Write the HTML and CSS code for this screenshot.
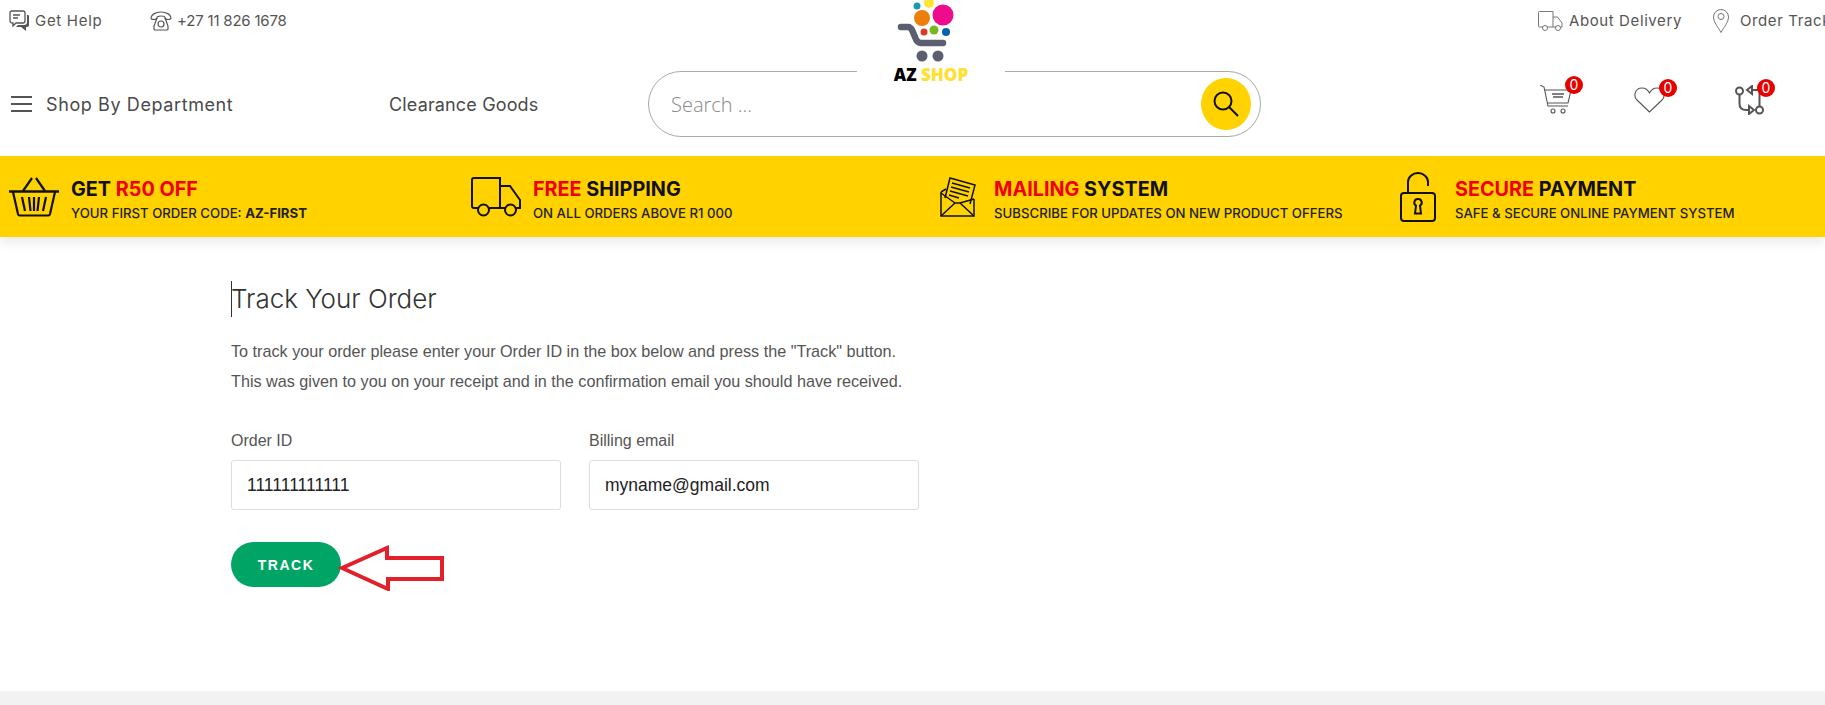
FILE: index.html
```html
<!DOCTYPE html>
<html lang="en">
<head>
    <meta charset="UTF-8">
    <meta name="viewport" content="width=device-width, initial-scale=1.0">
    <title>Track Your Order</title>
    <link rel="stylesheet" href="styles.css">
</head>
<body>

    <!-- Top bar -->
    <div class="top-bar">
        <a class="top-link link-help">
            <svg width="21" height="22" viewBox="0 0 21 22" fill="none" stroke="#555" stroke-width="1.3">
                <path d="M3 1h11a2 2 0 0 1 2 2v8a2 2 0 0 1-2 2H7l-3 3v-3H3a2 2 0 0 1-2-2V3a2 2 0 0 1 2-2z"/>
                <path d="M4 5h7M4 8h5"/>
                <path d="M18 5h1a1 1 0 0 1 1 1v9a2 2 0 0 1-2 2h-1v4l-5-4H7l2-2h6a3 3 0 0 0 3-3z" fill="#555" stroke="none"/>
            </svg>
            Get Help
        </a>
        <a class="top-link link-phone">
            <svg width="22" height="20" viewBox="0 0 22 20" fill="none" stroke="#555" stroke-width="1.2">
                <path d="M1 7c0-3 4-6 10-6s10 3 10 6c0 1-1 1.500-3 1.500S15 8 15 6.500c0-1-2-1.500-4-1.500S7 5.500 7 6.500C7 8 6 8.500 4 8.500S1 8 1 7z"/>
                <path d="M7 7l-3 8v3a1 1 0 0 0 1 1h12a1 1 0 0 0 1-1v-3l-3-8"/>
                <circle cx="11" cy="13" r="3"/>
            </svg>
            +27 11 826 1678
        </a>
        <a class="top-link link-delivery">
            <svg width="25" height="20" viewBox="0 0 25 20" fill="none" stroke="#777" stroke-width="1">
                <path d="M5 16H1.500a1 1 0 0 1-1-1V1.500a1 1 0 0 1 1-1H15V16H9"/>
                <path d="M15 6h4.500l4.500 6v4h-1.500M18 16h-3"/>
                <circle cx="7" cy="17" r="2.500"/>
                <circle cx="20" cy="17" r="2.500"/>
            </svg>
            About Delivery
        </a>
        <a class="top-link link-track">
            <svg width="16" height="24" viewBox="0 0 16 24" fill="none" stroke="#777" stroke-width="1">
                <path d="M8 23.500C5 18 .5 13 .5 8a7.500 7.500 0 0 1 15 0c0 5-4.500 10-7.500 15.500z"/>
                <circle cx="8" cy="7.500" r="3"/>
            </svg>
            Order Tracking
        </a>
    </div>

    <!-- Main nav with search -->
    <div class="nav-row">
        <a class="nav-link nav-dept">
            <svg width="21" height="16" viewBox="0 0 21 16" stroke="#555" stroke-width="2">
                <path d="M0 1h21M0 8h21M0 15h21"/>
            </svg>
            Shop By Department
        </a>
        <a class="nav-link nav-clearance">Clearance Goods</a>

        <form class="search-box">
            <div class="logo">
                <svg width="84" height="62" viewBox="0 0 84 62">
                    <circle cx="23" cy="6" r="3.500" fill="#1a9aa8"/>
                    <circle cx="35" cy="3" r="5" fill="#ffe533"/>
                    <circle cx="49" cy="15" r="10.500" fill="#ec0c8c"/>
                    <circle cx="28" cy="18" r="8" fill="#ec7f0c"/>
                    <circle cx="30" cy="32" r="3.500" fill="#e0362c"/>
                    <circle cx="40" cy="30" r="4.500" fill="#7cb422"/>
                    <circle cx="52" cy="32" r="4" fill="#0c62a8"/>
                    <path d="M7 27h7c2 0 3 1 4 3l3 7c1 3 3 6 6 6h22" fill="none" stroke="#5b5f70" stroke-width="6.500" stroke-linecap="round"/>
                    <circle cx="28" cy="56" r="5.500" fill="#5b5f70"/>
                    <circle cx="44" cy="56" r="5.500" fill="#5b5f70"/>
                </svg>
                <div class="logo-text">AZ <span>SHOP</span></div>
            </div>
            <input class="search-input" type="text" placeholder="Search ...">
            <button class="search-button" type="button">
                <svg width="26" height="26" viewBox="0 0 26 26" fill="none" stroke="#111" stroke-width="2">
                    <circle cx="10" cy="10" r="8.500"/>
                    <path d="M16 16l9 9"/>
                </svg>
            </button>
        </form>

        <div class="nav-icons">
            <a class="nav-icon icon-cart">
                <svg width="32" height="29" viewBox="0 0 32 29" fill="none" stroke="#555" stroke-width="1.100">
                    <path d="M0 0l4 2 4 19h20"/>
                    <path d="M5 5h26l-3 13H8"/>
                    <path d="M12 9h12M13 12h10" stroke-width="1.500"/>
                    <circle cx="13" cy="26" r="2"/>
                    <circle cx="23" cy="26" r="2"/>
                </svg>
                <span class="badge">0</span>
            </a>
            <a class="nav-icon icon-heart">
                <svg width="31" height="26" viewBox="0 0 31 26" fill="none" stroke="#555" stroke-width="1.100">
                    <path d="M15.500 25L3 13C-1 9 1 1 8 1c3 0 6 2 7.500 5C17 3 20 1 23 1c7 0 9 8 5 12z"/>
                </svg>
                <span class="badge">0</span>
            </a>
            <a class="nav-icon icon-compare">
                <svg width="30" height="30" viewBox="0 0 30 30" fill="none" stroke="#555" stroke-width="2">
                    <circle cx="4.500" cy="6" r="3.500"/>
                    <circle cx="24.500" cy="25" r="3.500"/>
                    <path d="M4.500 10v9c0 4 3 6 7 6h2"/>
                    <path d="M14 21l5 4-5 4z"/>
                    <path d="M24.500 21V5h-7"/>
                    <path d="M17 1l-5 4 5 4z"/>
                </svg>
                <span class="badge">0</span>
            </a>
        </div>
    </div>

    <!-- Yellow promo strip -->
    <div class="promo-strip">
        <div class="promo-item">
            <svg class="promo-icon" width="50" height="40" viewBox="0 0 50 40" fill="none" stroke="#111" stroke-width="2.200">
                <path d="M0 14.500h50" stroke-width="2.500"/>
                <path d="M14 14L23 1M27 1l9 13"/>
                <path d="M4 15l5 22a2 2 0 0 0 2 1.500h28a2 2 0 0 0 2-1.500l5-22"/>
                <path d="M13 20l3 14M20 20l1.500 14M25 20v14M30 20l-1.500 14M37 20l-3 14"/>
            </svg>
            <div class="promo-text">
                <div class="promo-title">GET <span>R50 OFF</span></div>
                <div class="promo-sub">YOUR FIRST ORDER CODE: <b>AZ-FIRST</b></div>
            </div>
        </div>
        <div class="promo-item">
            <svg class="promo-icon" width="50" height="40" viewBox="0 0 50 40" fill="none" stroke="#111" stroke-width="2">
                <path d="M7 31H3a2 2 0 0 1-2-2V3a2 2 0 0 1 2-2h26v30H18"/>
                <path d="M29 9h10l10 14v8h-4M34 31h-5"/>
                <circle cx="12.500" cy="33" r="5.500"/>
                <circle cx="39.500" cy="33" r="5.500"/>
            </svg>
            <div class="promo-text">
                <div class="promo-title"><span>FREE</span> SHIPPING</div>
                <div class="promo-sub">ON ALL ORDERS ABOVE R1 000</div>
            </div>
        </div>
        <div class="promo-item promo-mail">
            <svg class="promo-icon" width="36" height="40" viewBox="0 0 36 40" fill="none" stroke="#111" stroke-width="1.500">
                <path d="M5 21L10 1l25 7-5 19"/>
                <path d="M12 6l18 5M11 10l18 5M10 14l18 5M9 18l10 3"/>
                <path d="M1 15l5-3M1 15v24h33V22"/>
                <path d="M1 39l14-13h5l14 13M1 16l14 10M34 22L20 26"/>
            </svg>
            <div class="promo-text">
                <div class="promo-title"><span>MAILING</span> SYSTEM</div>
                <div class="promo-sub">SUBSCRIBE FOR UPDATES ON NEW PRODUCT OFFERS</div>
            </div>
        </div>
        <div class="promo-item promo-lock">
            <svg class="promo-icon" width="36" height="50" viewBox="0 0 36 50" fill="none" stroke="#111" stroke-width="2">
                <path d="M8 21V10a10 9 0 0 1 20 0v4"/>
                <rect x="1" y="21" width="34" height="28" rx="3"/>
                <path d="M18 27a3.500 3.500 0 0 1 2 6.500l1 8h-6l1-8a3.500 3.500 0 0 1 2-6.500z"/>
            </svg>
            <div class="promo-text">
                <div class="promo-title"><span>SECURE</span> PAYMENT</div>
                <div class="promo-sub">SAFE &amp; SECURE ONLINE PAYMENT SYSTEM</div>
            </div>
        </div>
    </div>

    <!-- Order tracking form -->
    <div class="track-page">
        <h1 class="track-title">Track Your Order</h1>
        <p class="track-intro">To track your order please enter your Order ID in the box below and press the "Track" button.<br>This was given to you on your receipt and in the confirmation email you should have received.</p>

        <form class="track-form">
            <div class="form-row">
                <div class="form-field">
                    <label for="order_id">Order ID</label>
                    <input type="text" id="order_id" value="111111111111">
                </div>
                <div class="form-field">
                    <label for="billing_email">Billing email</label>
                    <input type="text" id="billing_email" value="myname@gmail.com">
                </div>
            </div>
            <div class="button-row">
                <button type="button" class="track-button">TRACK</button>
                <svg class="track-arrow" width="106" height="46" viewBox="0 0 106 46" fill="none" stroke="#e3202a" stroke-width="4">
                    <path d="M4 23L49 3v10h55v21H50v10z"/>
                </svg>
            </div>
        </form>
    </div>

    <div class="footer-band"></div>

</body>
</html>
```

FILE: styles.css
```css
* {
    box-sizing: border-box;
}
body {
    margin: 0;
    height: 705px;
    overflow: hidden;
    background-color: #fff;
    font-family: "Liberation Sans", Arial, sans-serif;
    display: flex;
    flex-direction: column;
}

/* top bar */
.top-bar {
    height: 41px;
    display: flex;
    align-items: center;
    padding-left: 9px;
    white-space: nowrap;
    overflow: hidden;
    flex-shrink: 0;
}
.top-link {
    display: flex;
    align-items: center;
    font-family: Inter, sans-serif;
    font-size: 15px;
    color: #555;
    flex-shrink: 0;
}
.link-help {
    gap: 5px;
    width: 141px;
    letter-spacing: 0.7px;
}
.link-phone {
    gap: 5px;
    width: 1388px;
    letter-spacing: -0.2px;
}
.link-delivery {
    gap: 6px;
    width: 175px;
    letter-spacing: 0.6px;
}
.link-track {
    gap: 11px;
    letter-spacing: 0.6px;
}

/* nav row */
.nav-row {
    display: flex;
    align-items: center;
    padding: 30px 0 19px 11px;
    flex-shrink: 0;
}
.nav-link {
    font-family: Inter, sans-serif;
    font-size: 18px;
    color: #4a4a4a;
    white-space: nowrap;
}
.nav-dept {
    display: flex;
    align-items: center;
    gap: 14px;
    width: 378px;
    letter-spacing: 0.6px;
}
.nav-clearance {
    width: 259px;
    letter-spacing: 0.15px;
}
.search-box {
    position: relative;
    width: 613px;
    height: 66px;
    border: 1px solid #aaa;
    border-radius: 33px;
    display: flex;
    align-items: center;
    padding: 0 9px 0 20px;
}
.search-input {
    flex: 1;
    border: none;
    outline: none;
    font-family: "Open Sans", sans-serif;
    font-size: 20px;
    font-weight: 300;
    background: none;
}
.search-input::placeholder {
    color: #888;
}
.search-button {
    width: 50px;
    height: 52px;
    border: none;
    border-radius: 50%;
    background-color: #ffd200;
    padding: 0;
    display: flex;
    align-items: center;
    justify-content: center;
}
.logo {
    position: absolute;
    top: -72px;
    left: 208px;
    width: 148px;
    height: 88px;
    background-color: #fff;
    display: flex;
    flex-direction: column;
    align-items: center;
}
.logo svg {
    margin: 0 0 5px 9px;
}
.logo-text {
    font-family: "Open Sans", sans-serif;
    font-weight: 800;
    font-size: 17px;
    line-height: 16px;
    color: #000;
    white-space: nowrap;
}
.logo-text span {
    color: #ffe033;
}
.nav-icons {
    display: flex;
    align-items: flex-start;
    height: 30px;
    margin: -8px 0 0 279px;
}
.nav-icon {
    position: relative;
    display: block;
    line-height: 0;
}
.icon-cart {
    width: 94px;
}
.icon-heart {
    width: 101px;
    margin-top: 2px;
}
.badge {
    position: absolute;
    top: -9px;
    left: 25px;
    width: 18px;
    height: 18px;
    border-radius: 50%;
    background-color: #e60000;
    color: #fff;
    font-family: Inter, sans-serif;
    font-size: 14px;
    line-height: 18px;
    text-align: center;
}
.icon-heart .badge {
    top: -8px;
}
.icon-compare .badge {
    top: -6px;
    left: 22px;
}

/* promo strip */
.promo-strip {
    height: 81px;
    background-color: #ffd200;
    box-shadow: 0 6px 10px rgba(0, 0, 0, 0.08);
    display: grid;
    grid-template-columns: 462px 469px 460px 1fr;
    padding-left: 9px;
    flex-shrink: 0;
}
.promo-item {
    display: flex;
    align-items: center;
    gap: 12px;
}
.promo-mail {
    gap: 18px;
}
.promo-lock {
    gap: 19px;
}
.promo-text {
    padding-top: 5px;
    white-space: nowrap;
}
.promo-title {
    font-family: Inter, sans-serif;
    font-size: 19.800px;
    font-weight: 700;
    color: #111;
    margin-bottom: 4px;
}
.promo-title span {
    color: #f00000;
}
.promo-sub {
    font-family: Inter, sans-serif;
    font-size: 13.200px;
    font-weight: 500;
    color: #222;
}

/* track form */
.track-page {
    flex: 1;
    padding: 44px 0 0 231px;
}
.track-title {
    margin: 0 0 20px;
    font-family: Inter, sans-serif;
    font-size: 26px;
    font-weight: 300;
    line-height: 36px;
    color: #333;
    border-left: 1px solid #333;
    text-indent: -1px;
}
.track-intro {
    margin: 0 0 35px;
    font-size: 16.200px;
    line-height: 29.500px;
    color: #555;
}
.form-row {
    display: flex;
    gap: 28px;
}
.form-field label {
    display: block;
    font-size: 16px;
    line-height: 20px;
    color: #555;
    margin-bottom: 9px;
}
.form-field input {
    display: block;
    width: 330px;
    height: 50px;
    border: 1px solid #ddd;
    border-radius: 3px;
    padding: 0 15px;
    font-family: "Liberation Sans", Arial, sans-serif;
    font-size: 17.500px;
    color: #222;
}
.button-row {
    display: flex;
    align-items: center;
    margin-top: 28px;
}
.track-button {
    width: 110px;
    height: 45px;
    border: none;
    border-radius: 23px;
    background-color: #00a566;
    color: #fff;
    font-family: "Liberation Sans", Arial, sans-serif;
    font-size: 14px;
    font-weight: 700;
    letter-spacing: 1.5px;
}
.track-arrow {
    margin: 7px 0 0 -3px;
}
.footer-band {
    height: 14px;
    background-color: #f2f2f2;
    flex-shrink: 0;
}
```
